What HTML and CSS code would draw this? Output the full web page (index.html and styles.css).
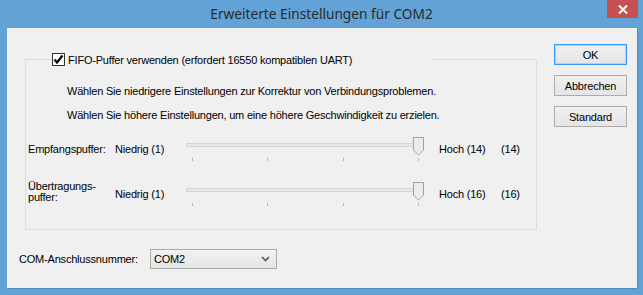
FILE: index.html
```html
<!DOCTYPE html>
<html lang="de">
<head>
<meta charset="utf-8">
<title>Erweiterte Einstellungen für COM2</title>
<link rel="stylesheet" href="styles.css">
</head>
<body>
<div class="window">
  <div class="titlebar">
    <span class="title">Erweiterte Einstellungen für COM2</span>
    <div class="close" aria-label="Schließen">
      <svg width="10" height="9" viewBox="0 0 10 9"><path d="M1 0.5 L9 8.5 M9 0.5 L1 8.5" stroke="#fff" stroke-width="2"/></svg>
    </div>
  </div>
  <div class="client">
    <div class="main">
      <div class="group">
        <div class="group-head">
          <span class="check">
            <svg width="11" height="11" viewBox="0 0 11 11"><path d="M1.5 5.5 L4 8.5 L9.5 1.5" fill="none" stroke="#000" stroke-width="2.2"/></svg>
          </span>
          <span>FIFO-Puffer verwenden (erfordert 16550 kompatiblen UART)</span>
        </div>
        <p class="hint hint-first">Wählen Sie niedrigere Einstellungen zur Korrektur von Verbindungsproblemen.</p>
        <p class="hint">Wählen Sie höhere Einstellungen, um eine höhere Geschwindigkeit zu erzielen.</p>
        <div class="slider-row row-first">
          <span class="row-label">Empfangspuffer:</span>
          <span>Niedrig (1)</span>
          <div class="slider">
            <div class="track"></div>
            <svg class="thumb" width="11" height="19" viewBox="0 0 11 19"><path d="M0.5 0.5 H10.5 V13 L5.5 18 L0.5 13 Z" fill="#ececec" stroke="#a0a0a0"/></svg>
            <div class="ticks"><i></i><i></i><i></i><i></i></div>
          </div>
          <span>Hoch (14)</span>
          <span>(14)</span>
        </div>
        <div class="slider-row">
          <span class="row-label row-label-2">Übertragungs-<br>puffer:</span>
          <span>Niedrig (1)</span>
          <div class="slider">
            <div class="track"></div>
            <svg class="thumb" width="11" height="19" viewBox="0 0 11 19"><path d="M0.5 0.5 H10.5 V13 L5.5 18 L0.5 13 Z" fill="#ececec" stroke="#a0a0a0"/></svg>
            <div class="ticks"><i></i><i></i><i></i><i></i></div>
          </div>
          <span>Hoch (16)</span>
          <span>(16)</span>
        </div>
      </div>
      <div class="port-row">
        <span>COM-Anschlussnummer:</span>
        <div class="select">
          <span>COM2</span>
          <svg width="9" height="6" viewBox="0 0 9 6"><path d="M1 1 L4.5 4.5 L8 1" fill="none" stroke="#555" stroke-width="1.6"/></svg>
        </div>
      </div>
    </div>
    <div class="buttons">
      <div class="btn btn-default">OK</div>
      <div class="btn">Abbrechen</div>
      <div class="btn">Standard</div>
    </div>
  </div>
</div>
</body>
</html>
```
FILE: styles.css
```css
html, body {
  margin: 0;
  padding: 0;
}
body {
  background: #62a2d6;
  font-family: "Liberation Sans", Arial, sans-serif;
  font-size: 11px;
  letter-spacing: -0.2px;
  color: #000;
}
.window {
  width: 643px;
  height: 295px;
  display: flex;
  flex-direction: column;
  background: #62a2d6;
  position: relative;
}
.titlebar {
  height: 28px;
  display: flex;
  align-items: center;
  justify-content: center;
}
.title {
  font-family: "Noto Sans", "Open Sans", sans-serif;
  font-size: 13.7px;
  letter-spacing: 0;
  color: #2a2a2a;
  margin-top: -1px;
}
.close {
  position: absolute;
  top: 0;
  left: 607px;
  width: 31px;
  height: 18px;
  background: #c75050;
  display: flex;
  align-items: center;
  justify-content: center;
}
.client {
  flex: 1;
  margin: 0 6px 7px 7px;
  background: #f0f0f0;
  display: flex;
  box-shadow: 1px 1px 0 #4f8cc0;
}
.main {
  padding: 31px 0 0 12px;
  width: 518px;
}
.group {
  margin-left: 6px;
  width: 508px;
  height: 169px;
  border: 1px solid #dcdcdc;
  padding: 0 0 0 2px;
}
.group-head {
  display: flex;
  align-items: center;
  width: 380px;
  height: 13px;
  margin: -7px 0 0 24px;
  background: #f0f0f0;
}
.check {
  width: 11px;
  height: 11px;
  border: 1px solid #333;
  background: #fff;
  display: flex;
  margin-right: 3px;
}
.hint {
  margin: 11px 0 0 39px;
  line-height: 13px;
}
.hint-first {
  margin-top: 19px;
}
.slider-row {
  display: grid;
  grid-template-columns: 87px 71px 253px 62px auto;
  align-items: center;
  height: 24px;
  margin-top: 21px;
  line-height: 11px;
}
.row-first {
  margin-top: 15px;
}
.row-label-2 {
  margin-top: -4px;
}
.slider {
  position: relative;
  width: 238px;
  height: 24px;
}
.track {
  margin-top: 6px;
  height: 2px;
  border: 1px solid #d6d6d6;
  background: #e7e7e7;
}
.thumb {
  position: absolute;
  top: 0;
  right: 0;
}
.ticks {
  display: flex;
  justify-content: space-between;
  padding: 0 5px 0 6px;
  margin-top: 11px;
}
.ticks i {
  display: block;
  width: 1px;
  height: 3px;
  background: #b8b8b8;
}
.port-row {
  display: grid;
  grid-template-columns: 131px 127px;
  align-items: center;
  margin-top: 19px;
}
.select {
  height: 18px;
  border: 1px solid #acacac;
  background: linear-gradient(#f2f2f2, #e5e5e5);
  display: flex;
  align-items: center;
  justify-content: space-between;
  padding: 0 6px 0 3px;
}
.buttons {
  margin-left: 17px;
  padding-top: 16px;
  display: flex;
  flex-direction: column;
  gap: 10px;
}
.btn {
  width: 71px;
  height: 19px;
  border: 1px solid #acacac;
  background: linear-gradient(#f0f0f0, #e5e5e5);
  display: flex;
  align-items: center;
  justify-content: center;
}
.btn-default {
  border-color: #3399ff;
  box-shadow: inset 0 0 0 1px #a8d4ff;
}
```
